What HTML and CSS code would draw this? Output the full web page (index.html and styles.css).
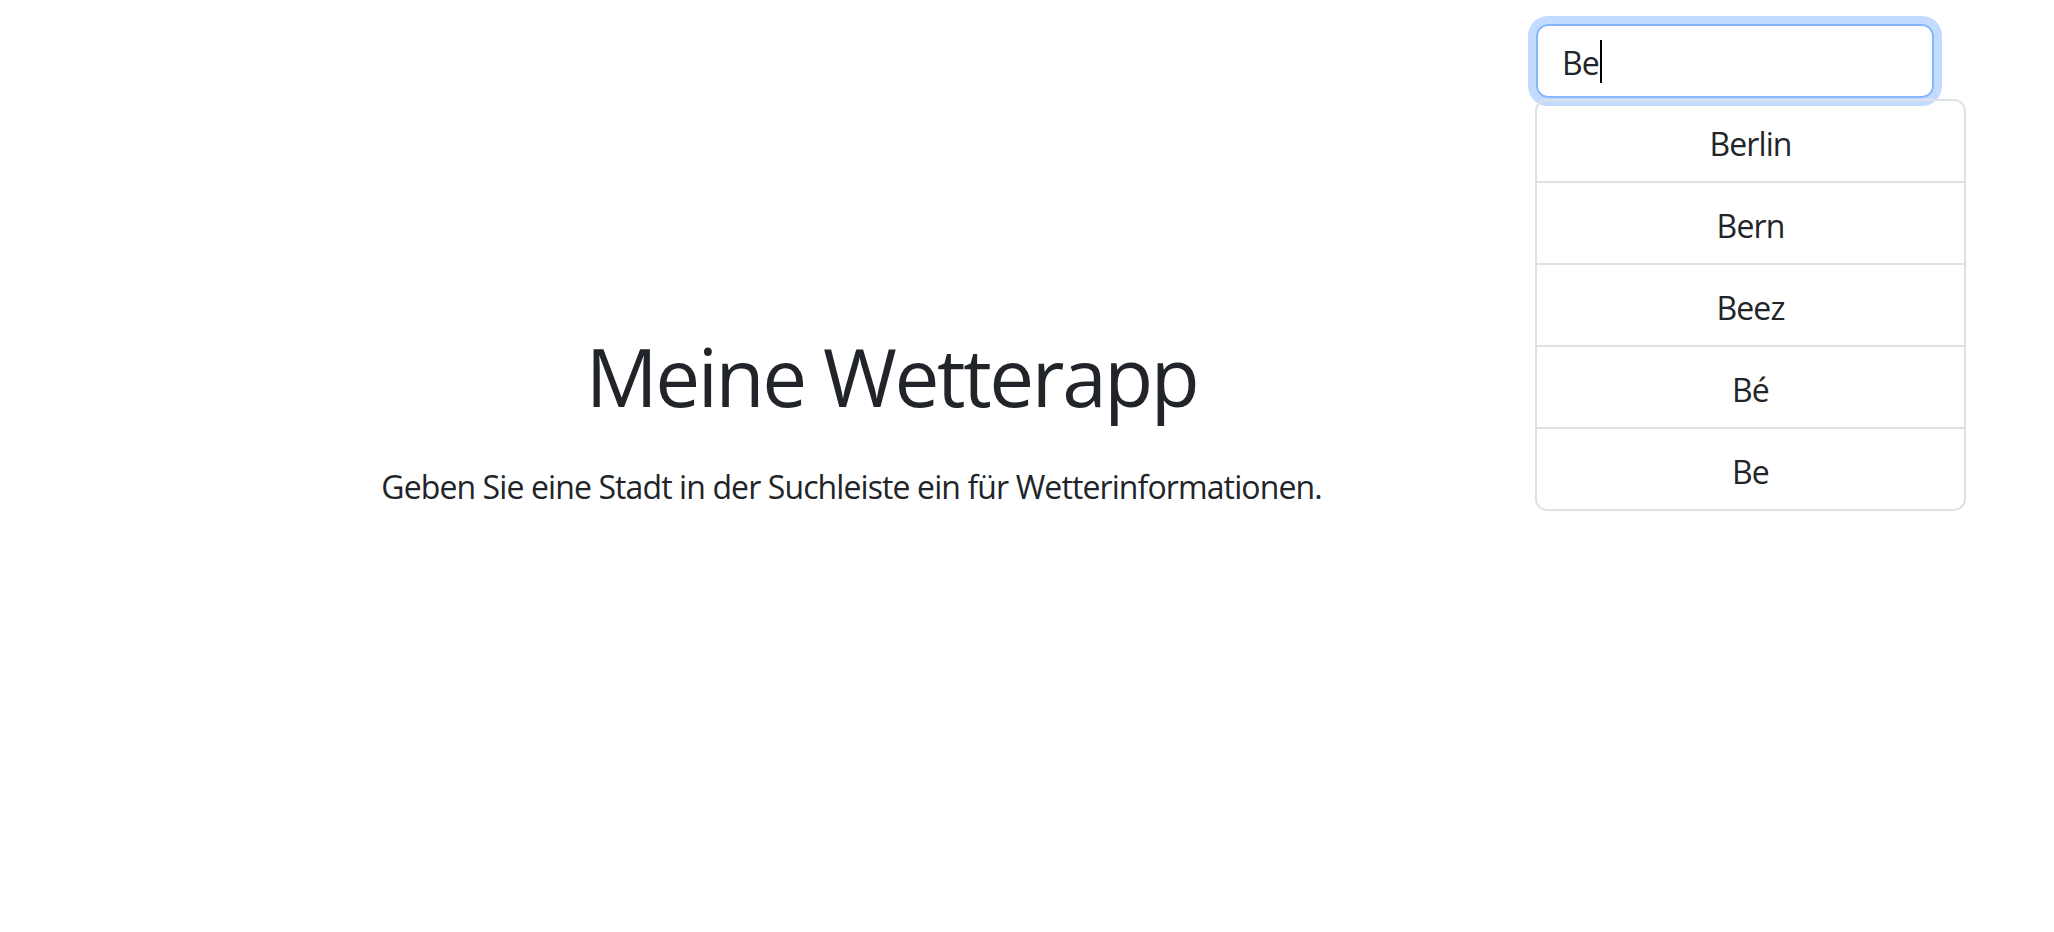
FILE: index.html
```html
<!DOCTYPE html>
<html lang="de">
<head>
<meta charset="utf-8">
<title>Meine Wetterapp</title>
<link rel="stylesheet" href="styles.css">
</head>
<body>
<div class="page">
  <main class="main">
    <h1 class="title">Meine Wetterapp</h1>
    <p class="lead">Geben Sie eine Stadt in der Suchleiste ein für Wetterinformationen.</p>
  </main>
  <aside class="search">
    <div class="search-input"><span class="typed">Be</span><span class="caret"></span></div>
    <ul class="suggestions">
      <li class="suggestion">Berlin</li>
      <li class="suggestion">Bern</li>
      <li class="suggestion">Beez</li>
      <li class="suggestion">Bé</li>
      <li class="suggestion">Be</li>
    </ul>
  </aside>
</div>
</body>
</html>
```
FILE: styles.css
```css
html, body {
  margin: 0;
  padding: 0;
  background: #ffffff;
}
body {
  font-family: "Open Sans", "Noto Sans", sans-serif;
  color: #212529;
  font-size: 32px;
  line-height: 1.5;
  letter-spacing: -0.028em;
}
.page {
  display: flex;
  align-items: flex-start;
  width: 2054px;
  height: 932px;
}
.main {
  flex: 1 1 auto;
  display: flex;
  flex-direction: column;
  align-items: center;
  padding-top: 328px;
  padding-left: 168px;
}
.title {
  margin: 0 0 39px 0;
  padding-left: 80px;
  font-size: 80px;
  font-weight: 400;
  line-height: 1.2;
  letter-spacing: -0.03em;
}
.lead {
  margin: 0;
  font-size: 32px;
  line-height: 48px;
}
.search {
  flex: 0 0 431px;
  margin-right: 88px;
  padding-top: 24px;
}
.search-input {
  box-sizing: border-box;
  width: 398px;
  height: 74px;
  margin-left: 1px;
  border: 2px solid #86b7fe;
  border-radius: 12px;
  box-shadow: 0 0 0 8px #c2dbfe;
  padding: 4px 24px 0 24px;
  display: flex;
  align-items: center;
  line-height: 48px;
}
.caret {
  display: inline-block;
  width: 2px;
  height: 43px;
  background: #000000;
  margin-left: 1px;
  margin-top: -4px;
}
.suggestions {
  list-style: none;
  margin: 1px 0 0 0;
  padding: 0;
  border: 2px solid #dee2e6;
  border-radius: 12px;
  overflow: hidden;
}
.suggestion {
  padding: 19px 16px 13px 16px;
  text-align: center;
  line-height: 48px;
  border-top: 2px solid #dee2e6;
}
.suggestion:first-child {
  border-top: 0;
}
```
